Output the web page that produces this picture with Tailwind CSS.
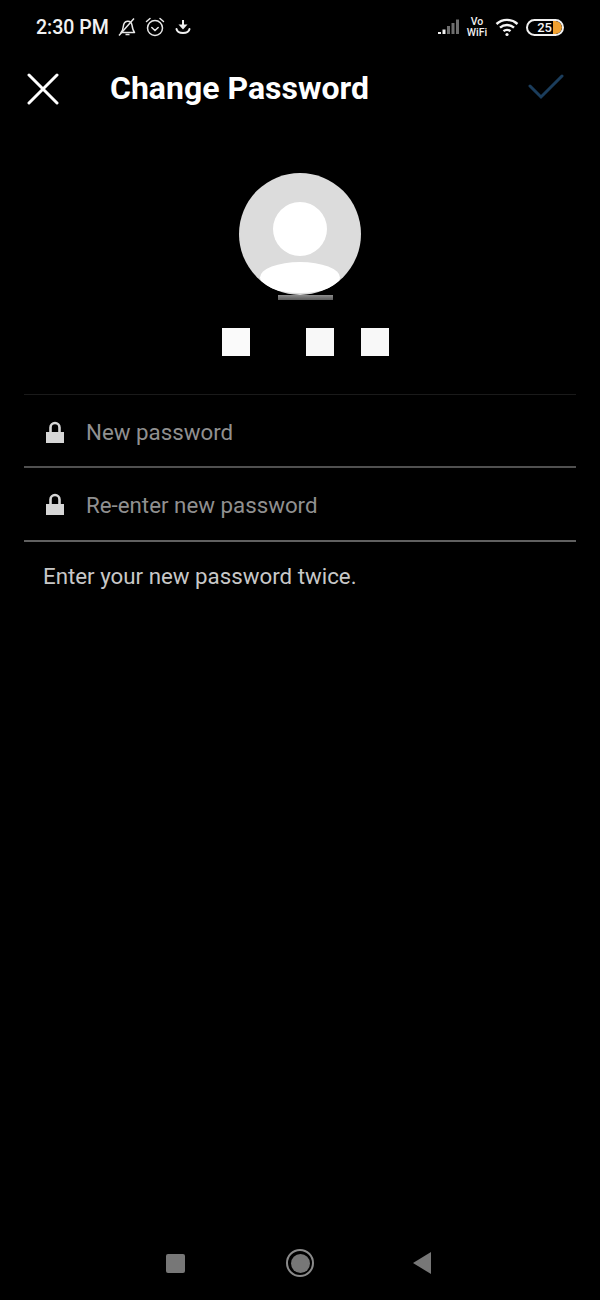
<!DOCTYPE html>
<html lang="en">
<head>
    <meta charset="UTF-8">
    <meta name="viewport" content="width=device-width, initial-scale=1.0">
    <title>Change Password</title>
    <script src="https://cdn.jsdelivr.net/npm/@tailwindcss/browser@4"></script>
</head>
<body class="bg-black font-['Roboto',sans-serif]">
    <div class="w-[600px] h-[1300px] flex flex-col overflow-hidden bg-black">
        <!-- status bar -->
        <div class="h-[54px] flex items-center pl-[36px] pr-[36px] text-white">
            <span class="mt-[2px] text-[19.500px] font-medium text-[#f2f2f2] leading-none">2:30 PM</span>
            <svg class="ml-[8px] w-[20px] h-[20px]" viewBox="0 0 20 20" fill="none" stroke="#e8e8e8" stroke-width="1.5">
                <path d="M4 15.500c1.600-1.600 2-3 2.300-6 .3-3 1.700-5 4-5.300 2.500-.3 4.200 1.300 4.700 4 .4 2.800.8 5.300 2.500 7.300H4z" stroke-linejoin="round"/>
                <path d="M8.500 17.500h4M2 18.500 17 1.500"/>
            </svg>
            <svg class="ml-[8px] w-[20px] h-[20px]" viewBox="0 0 20 20" fill="none" stroke="#e8e8e8" stroke-width="1.5">
                <circle cx="10" cy="11" r="7.500"/>
                <path d="M1.500 4.500 5 1.500M18.500 4.500 15 1.500" stroke-linecap="round"/>
                <path d="M6.800 10.500 10 13.500l3.200-3" stroke-linecap="round"/>
            </svg>
            <svg class="ml-[10px] w-[16px] h-[16px]" viewBox="0 0 16 16" fill="none" stroke="#f0f0f0" stroke-width="2">
                <path d="M8 1v7"/>
                <path d="M3.500 5.500h9L8 10.500z" fill="#f0f0f0" stroke="none"/>
                <path d="M1.500 10c.5 2.500 3 4 6.500 4s6-1.500 6.500-4" stroke-linecap="round"/>
            </svg>
            <div class="ml-auto flex items-center">
                <svg class="w-[23px] h-[18px]" viewBox="0 0 23 18" fill="#6e6e6e">
                    <path d="M1 14h3v2H1z" fill="#f0f0f0"/>
                    <path d="M5.500 11.500h3V16h-3z" fill="#f0f0f0"/>
                    <rect x="10" y="8" width="3" height="8"/>
                    <rect x="14.500" y="5" width="3" height="11"/>
                    <rect x="19" y="1.500" width="3" height="14.500"/>
                </svg>
                <div class="ml-[6px] w-[22px] text-[10.500px] font-medium leading-[11px] text-[#f0f0f0] text-center">Vo<br>WiFi</div>
                <svg class="ml-[7px] w-[24px] h-[20px]" viewBox="0 0 24 20" fill="none" stroke="#f5f5f5" stroke-width="2.400">
                    <path d="M1.500 7C7.500 1.500 16.500 1.500 22.500 7"/>
                    <path d="M5 10.700c4-3.600 10-3.600 14 0"/>
                    <path d="M8.500 14.200c2-1.700 5-1.700 7 0"/>
                    <circle cx="12" cy="17.500" r="1.600" fill="#f5f5f5" stroke="none"/>
                </svg>
                <div class="ml-[7px] w-[38px] h-[17px] rounded-full border-2 border-[#f0f0f0] flex items-center justify-end overflow-hidden">
                    <span class="mr-[1px] text-[13px] font-medium leading-none text-[#f5f5f5]">25</span>
                    <span class="w-[9px] h-[13px] bg-[#f0a030] rounded-r-full"></span>
                </div>
            </div>
        </div>

        <!-- toolbar -->
        <div class="h-[70px] flex items-center pl-[27px] pr-[36px]">
            <svg class="w-[32px] h-[32px]" viewBox="0 0 32 32" fill="none" stroke="#ffffff" stroke-width="3" stroke-linecap="round">
                <path d="M2 2l28 28M30 2 2 30"/>
            </svg>
            <h1 class="ml-[51px] mb-[2px] text-[32px] font-bold text-white leading-none">Change Password</h1>
            <svg class="ml-auto w-[36px] h-[26px] -translate-y-[2px]" viewBox="0 0 36 26" fill="none" stroke="#1b3d5c" stroke-width="3" stroke-linecap="round">
                <path d="M2 12l11 11L34 2"/>
            </svg>
        </div>

        <!-- avatar -->
        <div class="flex flex-col items-center mt-[49px]">
            <div class="relative w-[122px] h-[122px] rounded-full bg-[#dcdcdc] overflow-hidden">
                <div class="absolute left-[34px] top-[29px] w-[54px] h-[54px] rounded-full bg-white"></div>
                <div class="absolute left-[21px] top-[89px] w-[80px] h-[31px] rounded-[50%] bg-white"></div>
            </div>
            <div class="ml-[11px] w-[55px] h-[5px] bg-gradient-to-b from-[#8c8c8c] to-[#5a5a5a]"></div>
            <div class="mt-[28px] ml-[11px] flex w-[167px]">
                <div class="w-[28px] h-[28px] bg-[#fafafa]"></div>
                <div class="ml-[56px] w-[28px] h-[28px] bg-[#f8f8f8]"></div>
                <div class="ml-[27px] w-[28px] h-[28px] bg-[#f8f8f8]"></div>
            </div>
        </div>

        <!-- form -->
        <div class="mx-[24px] mt-[38px] border-t border-[#1a1a1a]">
            <div class="h-[73px] flex items-center pl-[21px] border-b-2 border-[#505050]">
                <svg class="mt-[3px] w-[20px] h-[22px]" viewBox="0 0 20 22" fill="#d6d6d6">
                    <path d="M1 11h18v11H1z"/>
                    <path d="M5.500 12V6.500a4.500 4.500 0 0 1 9 0V12" fill="none" stroke="#d6d6d6" stroke-width="2.600"/>
                </svg>
                <span class="ml-[21px] mt-[3px] text-[22.300px] leading-none text-[#909090]">New password</span>
            </div>
            <div class="h-[74px] flex items-center pl-[21px] border-b-2 border-[#606060]">
                <svg class="w-[20px] h-[22px]" viewBox="0 0 20 22" fill="#d6d6d6">
                    <path d="M1 11h18v11H1z"/>
                    <path d="M5.500 12V6.500a4.500 4.500 0 0 1 9 0V12" fill="none" stroke="#d6d6d6" stroke-width="2.600"/>
                </svg>
                <span class="ml-[21px] mt-[2px] text-[22.300px] leading-none text-[#909090]">Re-enter new password</span>
            </div>
            <p class="ml-[19px] mt-[21px] text-[22.300px] leading-[26px] text-[#c8c8c8]">Enter your new password twice.</p>
        </div>

        <!-- nav bar -->
        <div class="mt-auto h-[52px] flex items-start">
            <div class="ml-[166px] mt-[6px] w-[19px] h-[19px] rounded-[2px] bg-[#777777]"></div>
            <div class="ml-[101px] w-[28px] h-[28px] mt-[1px] rounded-full border-[2px] border-[#8a8a8a] flex items-center justify-center">
                <div class="w-[19px] h-[19px] rounded-full bg-[#777777]"></div>
            </div>
            <svg class="ml-[99px] mt-[4px] w-[18px] h-[22px]" viewBox="0 0 18 22" fill="#777777">
                <path d="M18 0v22L0 11z"/>
            </svg>
        </div>
    </div>
</body>
</html>
